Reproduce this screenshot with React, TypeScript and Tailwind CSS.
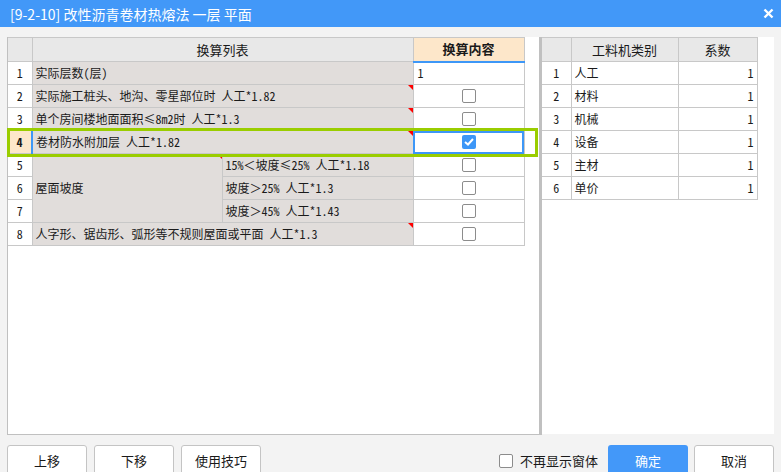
import React from "react";

const cellFont = {
  fontFamily: '"Noto Sans Mono CJK SC", "Noto Sans CJK SC", "DejaVu Sans Mono", monospace',
};
const uiFont = { fontFamily: '"Noto Sans CJK SC", "Noto Sans", sans-serif' };

function Tri() {
  return (
    <span className="absolute top-0 right-0 w-0 h-0 border-t-[5px] border-l-[5px] border-t-[#ff0000] border-l-transparent" />
  );
}

function Box({ checked }: { checked?: boolean }) {
  if (checked) {
    return (
      <span className="mx-auto flex w-[14px] h-[14px] rounded-[2px] bg-[#3d97f7] items-center justify-center">
        <svg width="10" height="8" viewBox="0 0 10 8">
          <path d="M1 4 L4 6.5 L9 1" stroke="#fff" strokeWidth="2" fill="none" />
        </svg>
      </span>
    );
  }
  return <span className="mx-auto block w-[14px] h-[14px] rounded-[2px] border border-[#8c8c8c] bg-white" />;
}

const td = "border border-[#c8c8c8] h-[23px] p-0 leading-[14px]";
const numTd = "border border-[#c8c8c8] h-[23px] p-0 leading-[14px] text-center bg-white text-[12px]";
const labTd = "border border-[#c8c8c8] h-[23px] p-0 leading-[14px] pl-[3px] bg-[#e1dddb] relative text-[12px] whitespace-nowrap";
const valTd = "border border-[#c8c8c8] h-[23px] p-0 leading-[14px] text-center bg-white";

export default function App() {
  return (
    <div className="w-[781px] h-[472px] overflow-hidden bg-[#f3f3f3] text-[#1a1a1a]" style={uiFont}>
      <div className="h-[27px] bg-[#4298f8] flex items-center justify-between pl-[10px] pr-[7px] text-white">
        <span className="text-[14px] leading-none">[9-2-10] 改性沥青卷材热熔法 一层 平面</span>
        <svg width="11" height="11" viewBox="0 0 11 11">
          <path d="M1.5 1.5 L9.5 9.5 M9.5 1.5 L1.5 9.5" stroke="#fff" strokeWidth="2.4" />
        </svg>
      </div>

      <div className="flex pl-[7px] pt-[10px] h-[408px]">
        {/* left panel */}
        <div className="relative w-[532px] h-[398px] border-l border-b border-[#c0c0c0] bg-white">
          <table className="table-fixed border-collapse" style={cellFont}>
            <colgroup>
              <col className="w-[24px]" />
              <col className="w-[190px]" />
              <col className="w-[191px]" />
              <col className="w-[111px]" />
            </colgroup>
            <thead>
              <tr>
                <th className="border border-[#c8c8c8] border-l-0 h-[24px] p-0 leading-[14px] bg-[#e8e8e8]" />
                <th colSpan={2} className="border border-[#c8c8c8] h-[24px] p-0 leading-[14px] bg-[#e8e8e8] font-normal text-[13px]" style={uiFont}>
                  换算列表
                </th>
                <th className="border border-[#c8c8c8] border-b-2 border-b-[#3d97f7] h-[24px] p-0 leading-[14px] bg-[#fde7ca] font-bold text-[13px]" style={uiFont}>
                  换算内容
                </th>
              </tr>
            </thead>
            <tbody>
              <tr>
                <td className={numTd + " border-l-0"}>1</td>
                <td colSpan={2} className={labTd}>实际层数(层)</td>
                <td className={td + " bg-white text-left pl-[4px] text-[12px]"}>1</td>
              </tr>
              <tr>
                <td className={numTd + " border-l-0"}>2</td>
                <td colSpan={2} className={labTd}>实际施工桩头、地沟、零星部位时 人工*1.82<Tri /></td>
                <td className={valTd}><Box /></td>
              </tr>
              <tr>
                <td className={numTd + " border-l-0"}>3</td>
                <td colSpan={2} className={labTd}>单个房间楼地面面积≤8m2时 人工*1.3<Tri /></td>
                <td className={valTd}><Box /></td>
              </tr>
              <tr>
                <td className={numTd + " border-l-0 font-bold"} style={{ backgroundColor: "#fde7ca" }}>4</td>
                <td colSpan={2} className={labTd + " border-l-2 border-l-[#3d97f7]"}>卷材防水附加层 人工*1.82<Tri /></td>
                <td className={valTd + " outline-2 -outline-offset-2 outline-[#3d97f7]"}><Box checked /></td>
              </tr>
              <tr>
                <td className={numTd + " border-l-0"}>5</td>
                <td rowSpan={3} className={labTd}>屋面坡度<Tri /></td>
                <td className={labTd}>15%＜坡度≤25% 人工*1.18</td>
                <td className={valTd}><Box /></td>
              </tr>
              <tr>
                <td className={numTd + " border-l-0"}>6</td>
                <td className={labTd}>坡度＞25% 人工*1.3</td>
                <td className={valTd}><Box /></td>
              </tr>
              <tr>
                <td className={numTd + " border-l-0"}>7</td>
                <td className={labTd}>坡度＞45% 人工*1.43</td>
                <td className={valTd}><Box /></td>
              </tr>
              <tr>
                <td className={numTd + " border-l-0"}>8</td>
                <td colSpan={2} className={labTd}>人字形、锯齿形、弧形等不规则屋面或平面 人工*1.3<Tri /></td>
                <td className={valTd}><Box /></td>
              </tr>
            </tbody>
          </table>
          <div className="absolute left-[-1px] top-[91px] w-[531px] h-[29px] border-[3px] border-[#9acd00] pointer-events-none" />
        </div>
        {/* splitter */}
        <div className="w-[3px] h-[398px] bg-[#c0c0c0]" />
        {/* right panel */}
        <div className="w-[232px] h-[397px] bg-white">
          <table className="table-fixed border-collapse" style={cellFont}>
            <colgroup>
              <col className="w-[29px]" />
              <col className="w-[107px]" />
              <col className="w-[79px]" />
            </colgroup>
            <thead>
              <tr>
                <th className="border border-[#c8c8c8] border-l-0 h-[24px] p-0 leading-[14px] bg-[#e8e8e8]" />
                <th className="border border-[#c8c8c8] h-[24px] p-0 leading-[14px] bg-[#e8e8e8] font-normal text-[13px]" style={uiFont}>工料机类别</th>
                <th className="border border-[#c8c8c8] h-[24px] p-0 leading-[14px] bg-[#e8e8e8] font-normal text-[13px]" style={uiFont}>系数</th>
              </tr>
            </thead>
            <tbody>
              {["人工", "材料", "机械", "设备", "主材", "单价"].map((n, i) => (
                <tr key={n}>
                  <td className={numTd + " border-l-0"}>{i + 1}</td>
                  <td className={td + " bg-white pl-[3px] text-[12px]"}>{n}</td>
                  <td className={td + " bg-white text-right pr-[3px] text-[12px]"}>1</td>
                </tr>
              ))}
            </tbody>
          </table>
        </div>
      </div>

      <div className="flex items-start pl-[7px] pr-[7px] mt-[10px]">
        <div className="flex gap-[7px]">
          <button className="w-[80px] h-[32px] bg-white border border-[#c4c4c4] rounded-[3px] text-[13px]">上移</button>
          <button className="w-[80px] h-[32px] bg-white border border-[#c4c4c4] rounded-[3px] text-[13px]">下移</button>
          <button className="w-[80px] h-[32px] bg-white border border-[#c4c4c4] rounded-[3px] text-[13px]">使用技巧</button>
        </div>
        <div className="ml-auto flex items-start">
          <label className="flex items-center gap-[7px] mt-[6px] mr-[10px] text-[13px]">
            <span className="w-[14px] h-[14px] border border-[#8c8c8c] rounded-[2px] bg-white" />
            不再显示窗体
          </label>
          <button className="w-[80px] h-[32px] bg-[#4398f9] rounded-[3px] text-white text-[13px] mr-[6px]">确定</button>
          <button className="w-[80px] h-[32px] bg-white border border-[#c4c4c4] rounded-[3px] text-[13px]">取消</button>
        </div>
      </div>
    </div>
  );
}
